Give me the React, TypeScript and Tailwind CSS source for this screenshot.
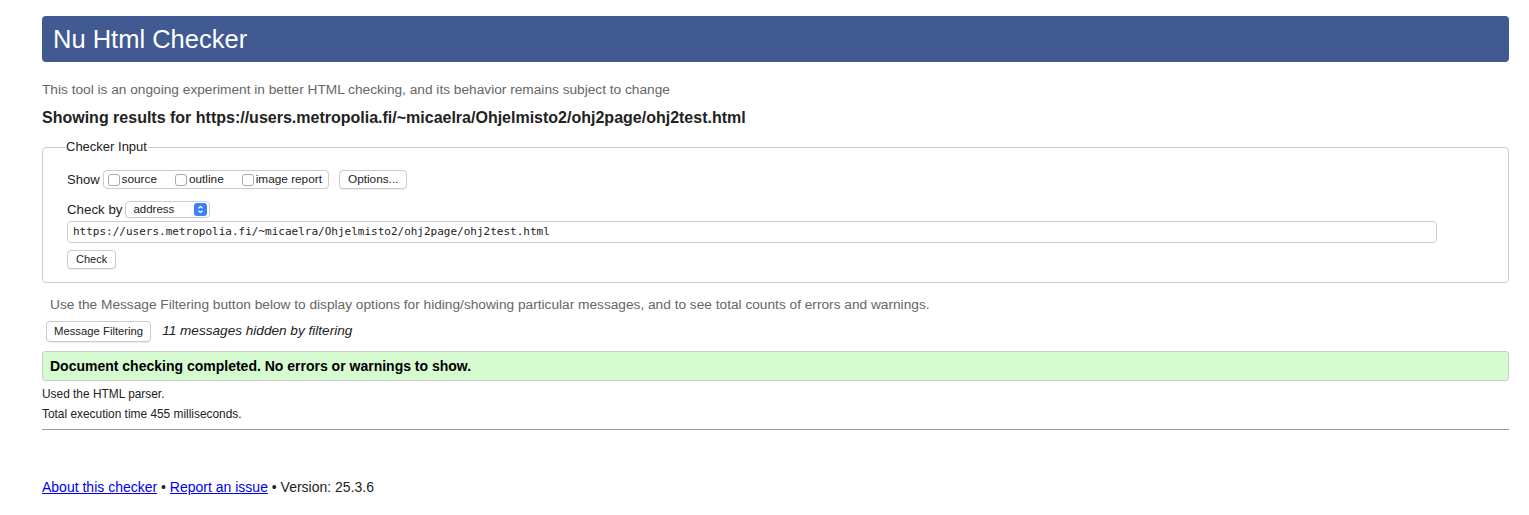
export default function App() {
  const url = "https://users.metropolia.fi/~micaelra/Ohjelmisto2/ohj2page/ohj2test.html";
  return (
    <div className="min-h-screen bg-white pl-[42px] pr-[20px] pt-[16px] pb-[20px] text-[#222] font-['Liberation_Sans',Arial,sans-serif]">
      <h1 className="flex h-[46px] items-center rounded-[4px] bg-[#415a91] px-[11px] text-[25.5px] text-white">
        Nu Html Checker
      </h1>
      <p className="mt-[20px] text-[13.7px] leading-[16px] text-[#666]">
        This tool is an ongoing experiment in better HTML checking, and its behavior remains subject to change
      </p>
      <h2 className="mt-[10px] text-[16px] font-bold leading-[20px]">Showing results for {url}</h2>

      <fieldset className="mt-[11px] rounded-[4px] border border-[#ccc] px-[24px] pb-[13px]">
        <legend className="-ml-[2px] px-[1px] text-[13px] leading-[16px] text-[#222]">Checker Input</legend>
        <div className="mt-[15px] flex items-center text-[13px] leading-[19px]">
          <span className="mr-[3px]">Show</span>
          <div className="flex h-[19px] items-center rounded-[4px] border border-[#ccc] pl-[4px] pr-[6px] text-[11.8px]">
            {["source", "outline", "image report"].map((label, i) => (
              <label key={label} className={"flex items-center " + (i > 0 ? "ml-[18px]" : "")}>
                <span className="mr-[2px] inline-block h-[12px] w-[12px] rounded-[3px] border border-[#aaa] bg-white" />
                {label}
              </label>
            ))}
          </div>
          <button className="ml-[10px] flex h-[19px] items-center rounded-[4px] border border-[#ccc] bg-white px-[8px] text-[11.8px] shadow-[0_1px_1px_rgba(0,0,0,0.08)]">
            Options...
          </button>
        </div>
        <div className="mt-[11px] flex items-center text-[13.3px] leading-[19px]">
          <span className="mr-[3px]">Check by</span>
          <div className="flex h-[17px] w-[85px] items-center justify-between rounded-[4px] border border-[#ccc] bg-white pl-[7px] pr-[2px] text-[11.5px]">
            address
            <span className="flex h-[13px] w-[13px] items-center justify-center rounded-[3px] bg-[#3b82f6]">
              <svg width="7" height="9" viewBox="0 0 7 9" fill="none" stroke="white" strokeWidth="1.2">
                <path d="M1.5 3.2 3.5 1.5 5.5 3.2M1.5 5.8 3.5 7.5 5.5 5.8" />
              </svg>
            </span>
          </div>
        </div>
        <div className="mt-[2px] flex h-[22px] w-[1370px] items-center rounded-[4px] border border-[#ccc] px-[5px] font-['DejaVu_Sans_Mono',monospace] text-[11px]">
          {url}
        </div>
        <button className="mt-[7px] flex h-[19px] items-center rounded-[4px] border border-[#ccc] bg-white px-[8px] text-[11px] shadow-[0_1px_1px_rgba(0,0,0,0.08)]">
          Check
        </button>
      </fieldset>

      <p className="ml-[8px] mt-[14px] text-[13.7px] leading-[16px] text-[#666]">
        Use the Message Filtering button below to display options for hiding/showing particular messages, and to see total counts of errors and warnings.
      </p>
      <div className="mt-[8px] flex items-center">
        <button className="ml-[4px] flex h-[21px] items-center rounded-[4px] border border-[#ccc] bg-white px-[7px] text-[11.3px] shadow-[0_1px_1px_rgba(0,0,0,0.08)]">
          Message Filtering
        </button>
        <span className="ml-[11px] text-[13.6px] italic">11 messages hidden by filtering</span>
      </div>
      <div className="mt-[9px] flex h-[30px] items-center rounded-[3px] border border-[#ccc] bg-[#d6fbd1] px-[7px] text-[14px] font-bold text-black">
        Document checking completed. No errors or warnings to show.
      </div>
      <p className="mt-[6px] text-[11.9px] leading-[14px]">Used the HTML parser.</p>
      <p className="mt-[6px] text-[11.9px] leading-[14px]">Total execution time 455 milliseconds.</p>
      <hr className="mt-[8px] border-t border-[#999]" />
      <p className="mt-[48px] text-[14px] leading-[18px]">
        <a href="#" className="text-[#0000ee] underline">About this checker</a>
        {" • "}
        <a href="#" className="text-[#0000ee] underline">Report an issue</a>
        {" • Version: 25.3.6"}
      </p>
    </div>
  );
}
